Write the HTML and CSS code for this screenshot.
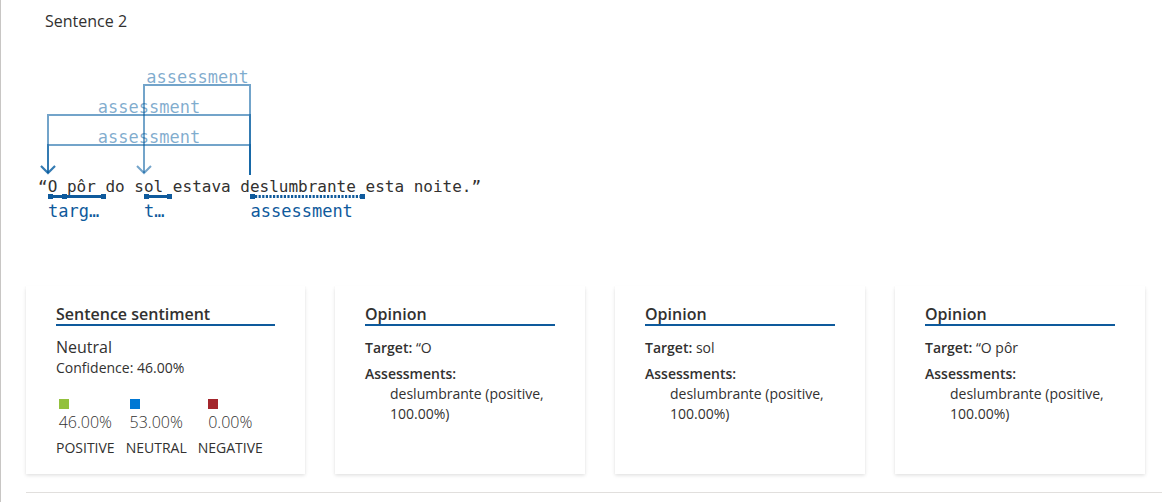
FILE: index.html
```html
<!DOCTYPE html>
<html lang="pt">
<head>
<meta charset="utf-8">
<title>Sentence 2</title>
<link rel="stylesheet" href="styles.css">
</head>
<body>
<div class="page">
  <section class="sentence">
    <h2 class="sentence-title">Sentence 2</h2>

    <svg class="diagram" width="480" height="170" viewBox="26 60 480 170" xmlns="http://www.w3.org/2000/svg">
      <g class="arc">
        <path d="M144 173 V85 H250 V175"/>
        <path d="M137 166 L144 173 L151 166"/>
      </g>
      <g class="arc">
        <path d="M48 173 V115 H250 V175"/>
        <path d="M41 166 L48 173 L55 166"/>
      </g>
      <g class="arc">
        <path d="M48 173 V145 H250 V175"/>
        <path d="M41 166 L48 173 L55 166"/>
      </g>
      <text class="arc-label" x="197.5" y="83">assessment</text>
      <text class="arc-label" x="149" y="113">assessment</text>
      <text class="arc-label" x="149" y="143">assessment</text>

      <text class="sentence-text" x="38" y="192">“O pôr do sol estava deslumbrante esta noite.”</text>

      <g class="span">
        <path d="M50 196.5 H104"/>
        <rect x="48" y="194" width="5" height="5"/>
        <rect x="62" y="194" width="5" height="5"/>
        <rect x="101" y="194" width="5" height="5"/>
      </g>
      <g class="span">
        <path d="M146 196.5 H170"/>
        <rect x="144" y="194" width="5" height="5"/>
        <rect x="167" y="194" width="5" height="5"/>
      </g>
      <g class="span">
        <path class="dotted" d="M255 196.5 H360"/>
        <rect x="250" y="194" width="5" height="5"/>
        <rect x="360" y="194" width="5" height="5"/>
      </g>
      <text class="span-label" x="48" y="217">targ…</text>
      <text class="span-label" x="144" y="217">t…</text>
      <text class="span-label" x="250.5" y="217">assessment</text>
    </svg>

    <div class="cards">
      <div class="card card-wide">
        <h3 class="card-title">Sentence sentiment</h3>
        <div class="sentiment-label">Neutral</div>
        <div class="confidence">Confidence: 46.00%</div>
        <div class="scores">
          <div class="score">
            <div class="score-value">
              <span class="swatch swatch-positive"></span>
              <span class="score-number">46.00%</span>
            </div>
            <span class="score-name">POSITIVE</span>
          </div>
          <div class="score">
            <div class="score-value">
              <span class="swatch swatch-neutral"></span>
              <span class="score-number">53.00%</span>
            </div>
            <span class="score-name">NEUTRAL</span>
          </div>
          <div class="score">
            <div class="score-value">
              <span class="swatch swatch-negative"></span>
              <span class="score-number">0.00%</span>
            </div>
            <span class="score-name">NEGATIVE</span>
          </div>
        </div>
      </div>

      <div class="card">
        <h3 class="card-title">Opinion</h3>
        <div class="target"><span class="field">Target:</span> “O</div>
        <div class="field">Assessments:</div>
        <div class="assessment">deslumbrante (positive, 100.00%)</div>
      </div>

      <div class="card">
        <h3 class="card-title">Opinion</h3>
        <div class="target"><span class="field">Target:</span> sol</div>
        <div class="field">Assessments:</div>
        <div class="assessment">deslumbrante (positive, 100.00%)</div>
      </div>

      <div class="card">
        <h3 class="card-title">Opinion</h3>
        <div class="target"><span class="field">Target:</span> “O pôr</div>
        <div class="field">Assessments:</div>
        <div class="assessment">deslumbrante (positive, 100.00%)</div>
      </div>
    </div>

    <div class="divider"></div>
  </section>
</div>
</body>
</html>
```

FILE: styles.css
```css
html, body {
  margin: 0;
  padding: 0;
  background: #ffffff;
}

body {
  font-family: "Open Sans", "Noto Sans", sans-serif;
  color: #323130;
  overflow: hidden;
}

.page {
  box-sizing: border-box;
  min-height: 502px;
  border-left: 1px solid #c8c6c4;
  padding: 10px 0 0 25px;
}

.sentence-title {
  margin: 0 0 0 19px;
  font-size: 16px;
  line-height: 22px;
  font-weight: 400;
}

.diagram {
  display: block;
  margin-top: 28px;
  overflow: visible;
}

.arc path {
  fill: none;
  stroke: #005a9e;
  stroke-opacity: 0.55;
  stroke-width: 2;
}

.arc-label {
  font-family: "DejaVu Sans Mono", monospace;
  font-size: 17px;
  fill: #005a9e;
  fill-opacity: 0.5;
  text-anchor: middle;
}

.sentence-text {
  font-family: "DejaVu Sans Mono", monospace;
  font-size: 16px;
  fill: #323130;
}

.span path {
  fill: none;
  stroke: #0f5a9c;
  stroke-width: 3;
}

.span path.dotted {
  stroke-dasharray: 2.2 1.4;
}

.span rect {
  fill: #0f5a9c;
}

.span-label {
  font-family: "DejaVu Sans Mono", monospace;
  font-size: 17px;
  fill: #0f5a9c;
}

.cards {
  display: flex;
  gap: 30px;
  margin-top: 56px;
}

.card {
  box-sizing: border-box;
  width: 250px;
  height: 188px;
  padding: 18px 30px 16px;
  background: #ffffff;
  box-shadow: 0 1.6px 3.6px rgba(0, 0, 0, 0.13), 0 0.3px 0.9px rgba(0, 0, 0, 0.11);
}

.card-wide {
  width: 279px;
}

.card-title {
  margin: 0;
  font-size: 16px;
  line-height: 20px;
  font-weight: 600;
  border-bottom: 2px solid #0e5a9c;
}

.sentiment-label {
  margin-top: 11px;
  font-size: 16px;
  line-height: 21px;
}

.confidence {
  font-size: 14px;
  line-height: 20px;
}

.scores {
  display: flex;
  gap: 11px;
  margin-top: 21px;
}

.score {
  display: flex;
  flex-direction: column;
  align-items: center;
}

.score-value {
  display: flex;
  flex-direction: column;
  align-items: flex-start;
}

.swatch {
  display: block;
  width: 10px;
  height: 10px;
  margin-bottom: 2px;
}

.swatch-positive { background: #93c13d; }
.swatch-neutral { background: #0078d4; }
.swatch-negative { background: #a4262c; }

.score-number {
  font-size: 16px;
  line-height: 22px;
  font-weight: 300;
}

.score-name {
  margin-top: 5px;
  font-size: 14px;
  line-height: 20px;
}

.target {
  margin-top: 12px;
  font-size: 14px;
  line-height: 20px;
  margin-bottom: 6px;
}

.field {
  font-size: 14px;
  line-height: 20px;
  font-weight: 600;
}

.assessment {
  padding-left: 25px;
  font-size: 14px;
  line-height: 20px;
}

.divider {
  margin-top: 18px;
  border-top: 1px solid #e1dfdd;
}
```
